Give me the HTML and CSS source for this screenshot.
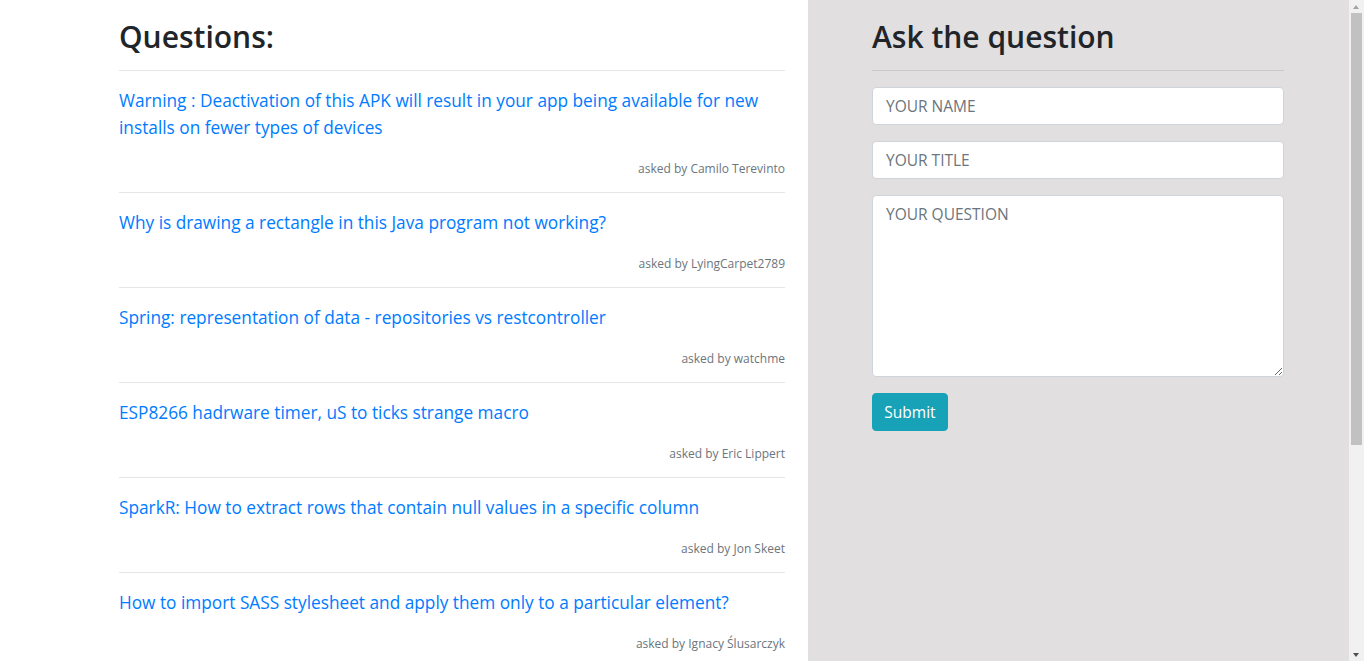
FILE: index.html
```html
<!DOCTYPE html>
<html lang="en">
<head>
<meta charset="utf-8">
<title>Questions</title>
<link rel="stylesheet" href="styles.css">
</head>
<body>
<div class="page">
  <main class="questions">
    <h2 class="title">Questions:</h2>
    <hr class="rule">
    <ul class="list">
      <li class="item">
        <a class="q-link" href="#">Warning : Deactivation of this APK will result in your app being available for new installs on fewer types of devices</a>
        <div class="meta"><span class="asked">asked by</span> <span class="author">Camilo Terevinto</span></div>
      </li>
      <li class="item">
        <a class="q-link" href="#">Why is drawing a rectangle in this Java program not working?</a>
        <div class="meta"><span class="asked">asked by</span> <span class="author">LyingCarpet2789</span></div>
      </li>
      <li class="item">
        <a class="q-link" href="#">Spring: representation of data - repositories vs restcontroller</a>
        <div class="meta"><span class="asked">asked by</span> <span class="author">watchme</span></div>
      </li>
      <li class="item">
        <a class="q-link" href="#">ESP8266 hadrware timer, uS to ticks strange macro</a>
        <div class="meta"><span class="asked">asked by</span> <span class="author">Eric Lippert</span></div>
      </li>
      <li class="item">
        <a class="q-link" href="#">SparkR: How to extract rows that contain null values in a specific column</a>
        <div class="meta"><span class="asked">asked by</span> <span class="author">Jon Skeet</span></div>
      </li>
      <li class="item">
        <a class="q-link" href="#">How to import SASS stylesheet and apply them only to a particular element?</a>
        <div class="meta"><span class="asked">asked by</span> <span class="author">Ignacy Ślusarczyk</span></div>
      </li>
    </ul>
  </main>
  <aside class="ask">
    <h2 class="title">Ask the question</h2>
    <hr class="rule rule-dark">
    <form class="form">
      <input class="field" type="text" placeholder="YOUR NAME">
      <input class="field" type="text" placeholder="YOUR TITLE">
      <textarea class="field area" placeholder="YOUR QUESTION"></textarea>
      <button class="btn" type="button">Submit</button>
    </form>
  </aside>
  <div class="scrollbar" aria-hidden="true">
    <div class="sb-arrow sb-up"></div>
    <div class="sb-track"><div class="sb-thumb"></div></div>
    <div class="sb-arrow sb-down"></div>
  </div>
</div>
</body>
</html>
```
FILE: styles.css
```css
* { box-sizing: border-box; }
html, body { margin: 0; padding: 0; }
body {
  font-family: "Segoe UI", "Open Sans", "Noto Sans", sans-serif;
  font-size: 16px;
  line-height: 1.5;
  color: #212529;
  background: #fff;
  overflow: hidden;
}
.page {
  display: grid;
  grid-template-columns: 808px 1fr 15px;
  height: 100vh;
  overflow: hidden;
}
.questions {
  padding: 18px 23px 0 119px;
}
.ask {
  background: #e1dfe0;
  padding: 18px 65px 0 64px;
}
.title {
  margin: 0 0 14px;
  font-size: 30px;
  font-weight: 600;
  line-height: 38px;
  color: #212529;
}
.rule {
  margin: 0;
  border: 0;
  border-top: 1px solid #e6e6e6;
}
.rule-dark { border-top-color: #cacaca; }
.list {
  list-style: none;
  margin: 0;
  padding: 0;
}
.item {
  padding: 16px 0 13px;
  border-bottom: 1px solid #e6e6e6;
}
.q-link {
  display: block;
  color: #007bff;
  text-decoration: none;
  font-size: 17.25px;
  line-height: 27px;
  margin-bottom: 18px;
}
.meta {
  text-align: right;
  font-size: 12px;
  line-height: 20px;
}
.asked { color: #6c757d; }
.author { color: #6c757d; }
.form {
  display: flex;
  flex-direction: column;
  align-items: flex-start;
  gap: 16px;
  margin-top: 16px;
}
.field {
  width: 100%;
  height: 38px;
  padding: 6px 13px;
  font: inherit;
  font-size: 15.5px;
  line-height: 24px;
  color: #495057;
  background: #fff;
  border: 1px solid #ced4da;
  border-radius: 4px;
  outline: none;
}
.field::placeholder { color: #6c757d; opacity: 1; }
.area {
  height: 182px;
  resize: vertical;
  display: block;
}
.btn {
  height: 38px;
  width: 76px;
  padding: 6px 0;
  font: inherit;
  font-size: 15.5px;
  line-height: 24px;
  color: #fff;
  background: #17a2b8;
  border: 1px solid #17a2b8;
  border-radius: 4px;
  cursor: pointer;
}
.scrollbar {
  display: flex;
  flex-direction: column;
  background: #f1f1f1;
  height: 100vh;
}
.sb-arrow {
  height: 13px;
  position: relative;
}
.sb-arrow::after {
  content: "";
  position: absolute;
  left: 4px;
  border-left: 3.5px solid transparent;
  border-right: 3.5px solid transparent;
}
.sb-up::after {
  top: 5px;
  border-bottom: 4px solid #a3a3a3;
}
.sb-down::after {
  bottom: 4px;
  border-top: 4px solid #505050;
}
.sb-track {
  flex: 1;
  padding: 0 2px;
}
.sb-thumb {
  height: 432px;
  background: #c1c1c1;
}
```
